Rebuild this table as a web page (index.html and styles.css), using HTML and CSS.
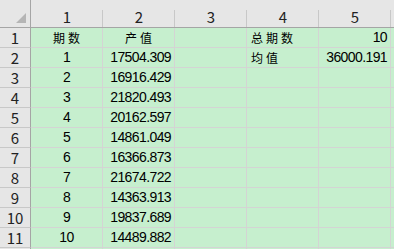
FILE: index.html
```html
<!DOCTYPE html>
<html>
<head>
<meta charset="utf-8">
<link rel="stylesheet" href="styles.css">
</head>
<body>
<div class="sheet">
  <div class="corner"><svg class="tri" width="11" height="11" viewBox="0 0 11 11"><polygon points="10,0 10,10 0,10" fill="#b5b5b5"/></svg></div>
  <div class="ch">1</div><div class="ch">2</div><div class="ch">3</div><div class="ch">4</div><div class="ch">5</div><div class="ch"></div>

  <div class="rh">1</div><div class="c ctr cjk">期数</div><div class="c ctr cjk">产值</div><div class="c"></div><div class="c left cjk">总期数</div><div class="c num">10</div><div class="c"></div>
  <div class="rh">2</div><div class="c ctr">1</div><div class="c num">17504.309</div><div class="c"></div><div class="c left cjk">均值</div><div class="c num">36000.191</div><div class="c"></div>
  <div class="rh">3</div><div class="c ctr">2</div><div class="c num">16916.429</div><div class="c"></div><div class="c"></div><div class="c"></div><div class="c"></div>
  <div class="rh">4</div><div class="c ctr">3</div><div class="c num">21820.493</div><div class="c"></div><div class="c"></div><div class="c"></div><div class="c"></div>
  <div class="rh">5</div><div class="c ctr">4</div><div class="c num">20162.597</div><div class="c"></div><div class="c"></div><div class="c"></div><div class="c"></div>
  <div class="rh">6</div><div class="c ctr">5</div><div class="c num">14861.049</div><div class="c"></div><div class="c"></div><div class="c"></div><div class="c"></div>
  <div class="rh">7</div><div class="c ctr">6</div><div class="c num">16366.873</div><div class="c"></div><div class="c"></div><div class="c"></div><div class="c"></div>
  <div class="rh">8</div><div class="c ctr">7</div><div class="c num">21674.722</div><div class="c"></div><div class="c"></div><div class="c"></div><div class="c"></div>
  <div class="rh">9</div><div class="c ctr">8</div><div class="c num">14363.913</div><div class="c"></div><div class="c"></div><div class="c"></div><div class="c"></div>
  <div class="rh">10</div><div class="c ctr">9</div><div class="c num">19837.689</div><div class="c"></div><div class="c"></div><div class="c"></div><div class="c"></div>
  <div class="rh">11</div><div class="c ctr">10</div><div class="c num">14489.882</div><div class="c"></div><div class="c"></div><div class="c"></div><div class="c"></div>
  <div class="rh"></div><div class="c"></div><div class="c"></div><div class="c"></div><div class="c"></div><div class="c"></div><div class="c"></div>
</div>
</body>
</html>
```

FILE: styles.css
```css
html, body {
  margin: 0;
  padding: 0;
  width: 394px;
  height: 249px;
  overflow: hidden;
  background: #c6efce;
}
.sheet {
  width: 394px;
  height: 249px;
  overflow: hidden;
  display: grid;
  grid-template-columns: 31px repeat(6, 72px);
  grid-template-rows: 28px repeat(12, 20px);
  font-family: "Liberation Sans", Arial, sans-serif;
  font-size: 14px;
  color: #000;
}
.corner {
  background: #e6e6e6;
  border-right: 1px solid #a5a5a5;
  border-bottom: 1px solid #a5a5a5;
  display: flex;
  align-items: flex-end;
  justify-content: flex-end;
  padding: 0 3px 3px 0;
}
.tri { display: block; }
.ch {
  background-color: #e6e6e6;
  background-image: linear-gradient(#c8c8c8, #c8c8c8);
  background-size: 1px 17px;
  background-position: right bottom;
  background-repeat: no-repeat;
  border-bottom: 1px solid #a5a5a5;
  font-family: "Noto Sans CJK SC", sans-serif;
  font-size: 15px;
  display: flex;
  align-items: flex-end;
  justify-content: center;
  line-height: 18px;
  padding-bottom: 1px;
  color: #222;
}
.rh {
  background: #e6e6e6;
  border-right: 1px solid #a5a5a5;
  border-bottom: 1px solid #c8c8c8;
  font-family: "Noto Sans CJK SC", sans-serif;
  font-size: 15px;
  display: flex;
  align-items: center;
  justify-content: center;
  line-height: 19px;
  color: #222;
}
.c {
  background: #c6efce;
  border-right: 1px solid #d4d4d4;
  border-bottom: 1px solid #d4d4d4;
  display: flex;
  align-items: center;
  line-height: 19px;
  white-space: nowrap;
  letter-spacing: -0.6px;
}
.ctr { justify-content: center; }
.num { justify-content: flex-end; padding-right: 3px; }
.left { justify-content: flex-start; padding-left: 4px; }
.cjk {
  font-family: "Noto Sans CJK SC", sans-serif;
  font-size: 12px;
  letter-spacing: 3px;
}
.ctr.cjk { padding-left: 3px; }
```
